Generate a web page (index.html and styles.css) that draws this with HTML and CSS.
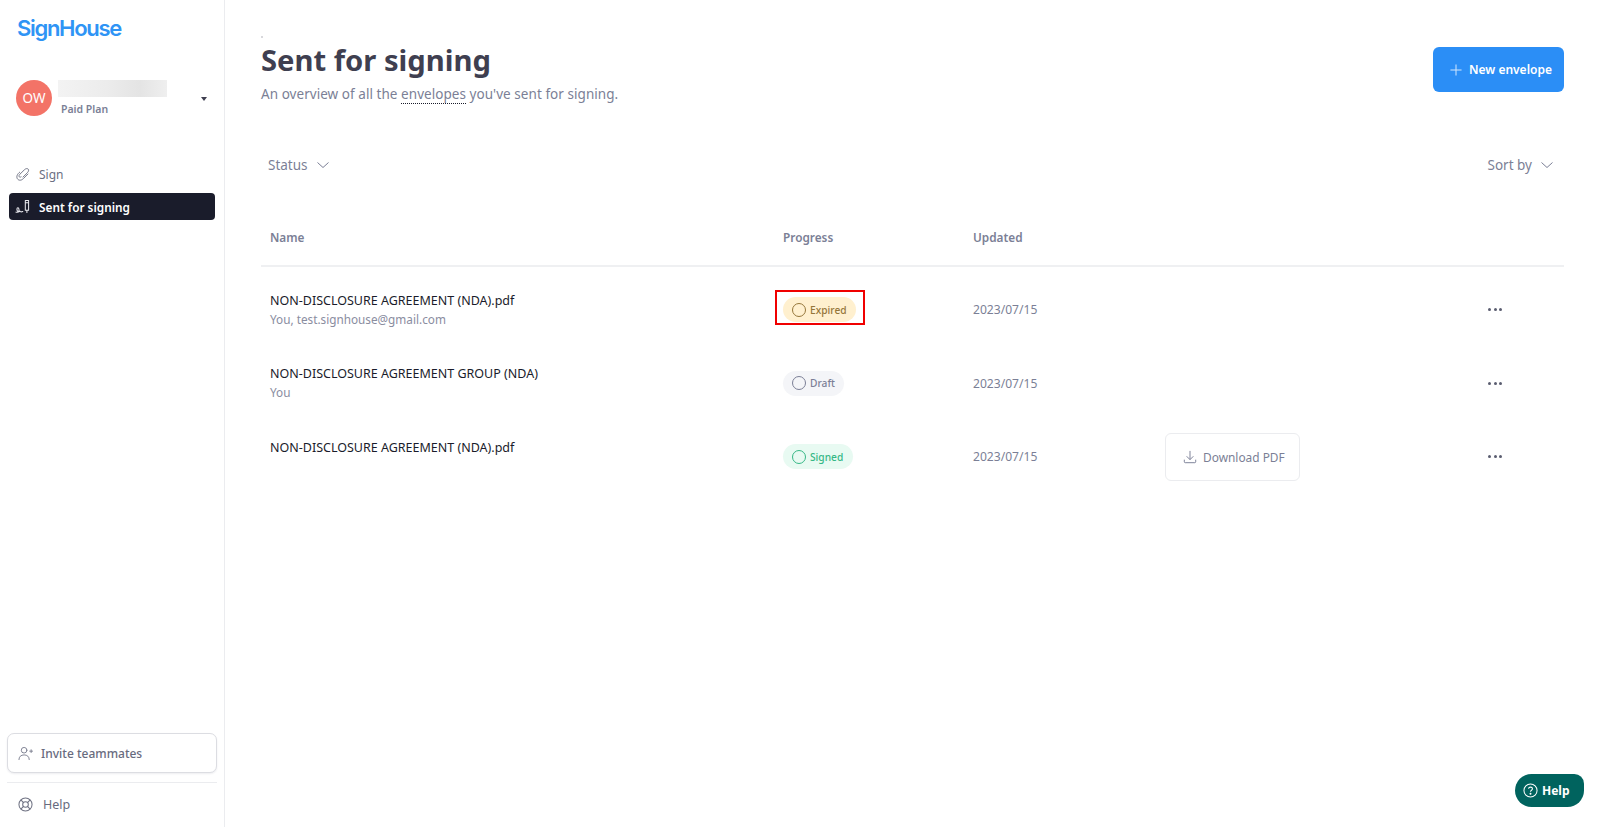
FILE: index.html
```html
<!DOCTYPE html>
<html lang="en">
<head>
<meta charset="utf-8">
<title>SignHouse - Sent for signing</title>
<link rel="stylesheet" href="styles.css">
</head>
<body>
<div class="app">
  <aside class="sidebar">
    <div class="logo">SignHouse</div>
    <div class="account">
      <div class="avatar">OW</div>
      <div class="account-info">
        <div class="blurred"></div>
        <div class="plan">Paid Plan</div>
      </div>
      <div class="caret"></div>
    </div>
    <nav class="nav">
      <a class="nav-item">
        <svg class="nav-icon" viewBox="0 0 16 16" fill="none" stroke="currentColor" stroke-width="1" stroke-linecap="round" stroke-linejoin="round"><path d="M5 5.500C2.500 7.500 1.200 10 2.500 12.500c1.400 2.200 4.300 2 6.300 0l5-5M6.500 10.500c-1 .7-2 .4-2.200-.5-.2-.8.3-1.700 1-2.400L10 3c1.300-1.300 3-1.800 4-.8s.5 2.600-.8 3.900L8.500 10.800"/></svg>
        <span>Sign</span>
      </a>
      <a class="nav-item active">
        <svg class="nav-icon" viewBox="0 0 16 16" fill="none" stroke="currentColor" stroke-width="1.100" stroke-linecap="round" stroke-linejoin="round"><path d="M11 1.500h3.500V12H11zM11 4h3.500M12.700 12v2.500M1 14c1.400.5 2.900 0 3.200-1.700.2-1.400-.2-3-1.200-3-1.200 0-1.300 2.700 0 4 .8.800 1.700.4 2.100-.5.500 1 1.800 1.100 3.200.5"/></svg>
        <span>Sent for signing</span>
      </a>
    </nav>
    <div class="sidebar-bottom">
      <button class="invite">
        <svg class="invite-icon" viewBox="0 0 16 16" fill="none" stroke="currentColor" stroke-width="1" stroke-linecap="round"><circle cx="6.500" cy="4.500" r="3"/><path d="M1 14.500c0-3.200 2.200-5 5.500-5s5.500 1.800 5.500 5M12.500 5.500h3M14 4v3"/></svg>
        <span>Invite teammates</span>
      </button>
      <a class="help-link">
        <svg class="help-icon" viewBox="0 0 16 16" fill="none" stroke="currentColor" stroke-width="1.100"><circle cx="8" cy="8" r="7"/><circle cx="8" cy="8" r="3"/><path d="M3 3l2.900 2.900M13 3l-2.900 2.900M3 13l2.900-2.900M13 13l-2.900-2.900"/></svg>
        <span>Help</span>
      </a>
    </div>
  </aside>
  <main class="main">
    <header class="page-head">
      <div class="titles">
        <div class="crumb"></div>
        <h1>Sent for signing</h1>
        <p>An overview of all the <span class="dotted">envelopes</span> you've sent for signing.</p>
      </div>
      <button class="new-btn">
        <svg class="plus" viewBox="0 0 14 14" fill="none" stroke="currentColor" stroke-width="1.200"><path d="M7 .5v13M.5 7h13"/></svg>
        <span>New envelope</span>
      </button>
    </header>
    <div class="filters">
      <div class="filter">Status <svg class="chev" viewBox="0 0 12 8" fill="none" stroke="currentColor" stroke-width="1"><path d="M.5 1.500l5.500 5 5.500-5"/></svg></div>
      <div class="filter">Sort by <svg class="chev" viewBox="0 0 12 8" fill="none" stroke="currentColor" stroke-width="1"><path d="M.5 1.500l5.500 5 5.500-5"/></svg></div>
    </div>
    <div class="table">
      <div class="row head">
        <div>Name</div>
        <div>Progress</div>
        <div>Updated</div>
      </div>
      <div class="row">
        <div>
          <div class="doc">NON-DISCLOSURE AGREEMENT (NDA).pdf</div>
          <div class="who">You, test.signhouse@gmail.com</div>
        </div>
        <div><span class="badge expired"><i class="ring"></i>Expired<b class="annot"></b></span></div>
        <div class="date">2023/07/15</div>
        <div></div>
        <div class="dots"><i></i><i></i><i></i></div>
      </div>
      <div class="row">
        <div>
          <div class="doc">NON-DISCLOSURE AGREEMENT GROUP (NDA)</div>
          <div class="who">You</div>
        </div>
        <div><span class="badge draft"><i class="ring"></i>Draft</span></div>
        <div class="date">2023/07/15</div>
        <div></div>
        <div class="dots"><i></i><i></i><i></i></div>
      </div>
      <div class="row">
        <div class="doc-only">
          <div class="doc">NON-DISCLOSURE AGREEMENT (NDA).pdf</div>
        </div>
        <div><span class="badge signed"><i class="ring"></i>Signed</span></div>
        <div class="date">2023/07/15</div>
        <div>
          <button class="download">
            <svg class="dl-icon" viewBox="0 0 16 16" fill="none" stroke="currentColor" stroke-width="1.100" stroke-linecap="round" stroke-linejoin="round"><path d="M8 1.500v9M4.500 7.500 8 11l3.500-3.500M1.500 11.500v2c0 .6.400 1 1 1h11c.6 0 1-.4 1-1v-2"/></svg>
            <span>Download PDF</span>
          </button>
        </div>
        <div class="dots"><i></i><i></i><i></i></div>
      </div>
    </div>
  </main>
</div>
<button class="help-widget">
  <svg class="q-icon" viewBox="0 0 16 16" fill="none" stroke="currentColor" stroke-width="1.100"><circle cx="8" cy="8" r="7"/><path d="M5.900 6.200C6 5 6.900 4.400 8 4.400c1.200 0 2.100.7 2.100 1.800 0 1.500-2.100 1.500-2.100 3"/><circle cx="8" cy="11.400" r=".5" fill="currentColor"/></svg>
  <span>Help</span>
</button>
</body>
</html>
```
FILE: styles.css
```css
* { box-sizing: border-box; }
html, body { margin: 0; height: 100%; }
body {
  font-family: "Noto Sans", "Open Sans", sans-serif;
  background: #fff;
  color: #3f3f50;
  overflow: hidden;
}
button { font: inherit; cursor: pointer; }

.app { display: flex; height: 827px; }

/* Sidebar */
.sidebar {
  width: 225px;
  flex: none;
  display: flex;
  flex-direction: column;
  border-right: 1px solid #ebecef;
  padding: 0 7px 0 0;
}
.logo {
  margin: 13px 0 0 17px;
  height: 30px;
  font-family: "Inter", "Liberation Sans", sans-serif;
  font-size: 22px;
  line-height: 30px;
  font-weight: 600;
  letter-spacing: -1.300px;
  color: #2f94f5;
}
.account {
  display: flex;
  align-items: flex-start;
  margin: 37px 0 0 16px;
}
.avatar {
  width: 36px;
  height: 36px;
  border-radius: 50%;
  background: #f37367;
  color: #fff;
  font-size: 13.500px;
  line-height: 36px;
  text-align: center;
  flex: none;
}
.account-info { margin-left: 6px; width: 109px; }
.blurred {
  width: 109px;
  height: 17px;
  background: linear-gradient(90deg, #f3f3f3 0%, #ececec 45%, #e4e4e4 75%, #efefef 100%);
}
.plan {
  margin: 4px 0 0 3px;
  font-size: 10.500px;
  line-height: 16px;
  font-weight: 600;
  color: #7b7f96;
}
.caret {
  width: 0;
  height: 0;
  margin: 17px 0 0 34px;
  border-left: 3.500px solid transparent;
  border-right: 3.500px solid transparent;
  border-top: 4px solid #3f3f50;
}
.nav { margin-top: 44px; display: flex; flex-direction: column; gap: 5px; padding: 0 2px 0 9px; }
.nav-item {
  display: flex;
  align-items: center;
  height: 27px;
  padding-left: 6px;
  font-size: 12px;
  color: #6b6f82;
  border-radius: 4px;
}
.nav-item.active {
  background: #1a1c2b;
  color: #fff;
  font-size: 11.800px;
  font-weight: 600;
}
.nav-icon { width: 15px; height: 15px; margin-right: 9px; flex: none; color: #6e7182; }
.active .nav-icon { color: #e8e8ee; }
.sidebar-bottom { margin-top: auto; padding-left: 7px; }
.invite {
  width: 210px;
  height: 40px;
  display: flex;
  align-items: center;
  padding: 0 0 0 10px;
  background: #fff;
  border: 1px solid #dcdde2;
  border-radius: 7px;
  box-shadow: 0 1px 2px rgba(30, 30, 60, .08);
  font-size: 12px;
  font-weight: 500;
  color: #686b7e;
}
.invite-icon { width: 15px; height: 15px; margin-right: 8px; color: #7c7f90; }
.help-link {
  display: flex;
  align-items: center;
  height: 45px;
  margin-top: 9px;
  padding: 0 0 2px 11px;
  border-top: 1px solid #ebecef;
  font-size: 12.500px;
  color: #686b7e;
}
.help-icon { width: 15px; height: 15px; margin-right: 10px; color: #6e7182; }

/* Main */
.main { flex: 1; min-width: 0; padding: 0 36px 0 36px; }
.page-head {
  display: flex;
  justify-content: space-between;
  align-items: flex-start;
  padding-top: 36px;
}
.crumb {
  width: 2px;
  height: 2px;
  margin-bottom: 2px;
  background: #d8d8dc;
}
h1 {
  margin: 0;
  font-size: 29.200px;
  line-height: 40px;
  font-weight: 700;
  color: #3f3f50;
}
.titles p {
  margin: 3.500px 0 0;
  font-size: 13.500px;
  line-height: 20px;
  color: #7b7f96;
  letter-spacing: .05px;
}
.dotted { border-bottom: 1px dotted #1a1c2b; }
.new-btn {
  width: 131px;
  height: 45px;
  margin-top: 11px;
  display: flex;
  align-items: center;
  padding: 0 0 0 17px;
  background: #2b8ef6;
  border: 0;
  border-radius: 6px;
  color: #fff;
  font-size: 12px;
  font-weight: 600;
}
.plus { width: 12px; height: 12px; margin-right: 7px; color: #cfe5fd; }
.filters {
  display: flex;
  justify-content: space-between;
  margin-top: 51.500px;
  padding: 0 11px 0 7px;
}
.filter {
  display: flex;
  align-items: center;
  gap: 9px;
  font-size: 13.500px;
  line-height: 20px;
  color: #7b7f96;
}
.chev { width: 12px; height: 8px; }
.table { margin-top: 35px; }
.row {
  display: grid;
  grid-template-columns: 513px 190px 192px 323px 1fr;
  align-items: center;
  height: 73.500px;
  padding-left: 9px;
}
.row.head {
  height: 57px;
  margin-bottom: 6px;
  padding-bottom: 2px;
  border-bottom: 2px solid #eff0f2;
  font-size: 11.800px;
  font-weight: 600;
  color: #7b7f96;
}
.doc { font-size: 12.500px; line-height: 19px; color: #1a1c2b; }
.doc-only { align-self: start; padding-top: 18px; }
.who { font-size: 11.750px; line-height: 19px; color: #8a8d9f; }
.date { font-size: 12.100px; color: #7b7f96; }
.badge {
  position: relative;
  display: inline-flex;
  align-items: center;
  height: 25px;
  padding: 0 9.500px 0 9px;
  border-radius: 13px;
  font-size: 10.200px;
  font-weight: 500;
}
.ring {
  width: 14px;
  height: 14px;
  margin-right: 4px;
  border: 1px solid currentColor;
  border-radius: 50%;
}
.expired { background: #fff0cf; color: #95763a; }
.draft { background: #f4f5f8; color: #7b7f96; }
.signed { background: #e8faf2; color: #36b886; }
.annot {
  position: absolute;
  left: -8px;
  top: -7px;
  width: 90px;
  height: 35px;
  border: 2px solid #f00000;
}
.download {
  width: 135px;
  height: 48px;
  display: flex;
  align-items: center;
  padding: 0 0 0 17px;
  background: #fff;
  border: 1px solid #ebecef;
  border-radius: 6px;
  color: #7b7f96;
  font-size: 11.900px;
}
.dl-icon { width: 14px; height: 14px; margin-right: 6px; }
.dots { display: flex; gap: 2.500px; }
.dots i { width: 3px; height: 3px; border-radius: 50%; background: #5a5d70; }
.help-widget {
  position: fixed;
  right: 16px;
  bottom: 20px;
  height: 33px;
  width: 69px;
  display: flex;
  align-items: center;
  padding: 0 0 0 8px;
  border: 0;
  border-radius: 17px 10px 17px 17px;
  background: #00635e;
  color: #fff;
  font-size: 12px;
  font-weight: 700;
}
.q-icon { width: 15px; height: 15px; margin-right: 4px; }
```
